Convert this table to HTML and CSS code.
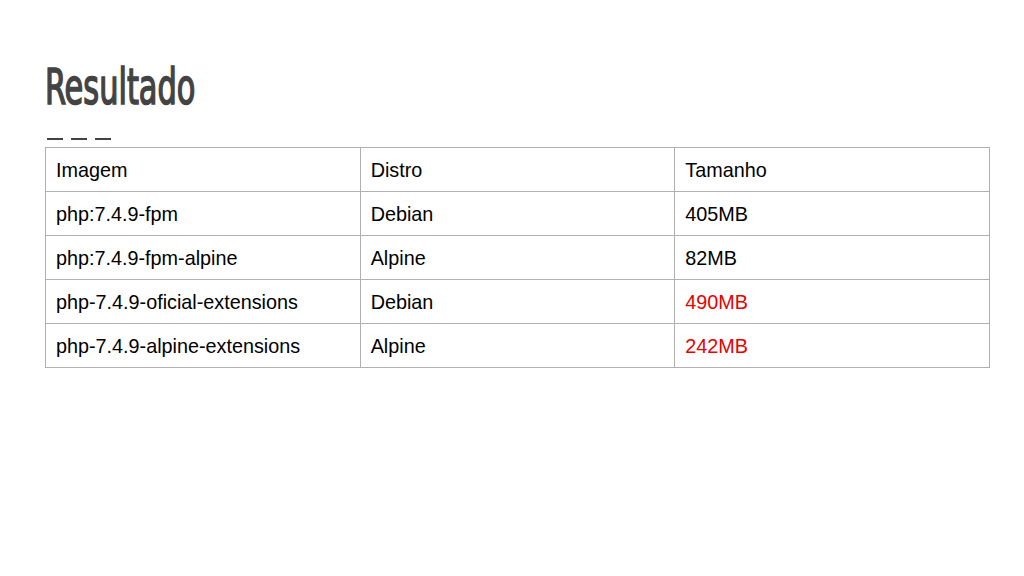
FILE: index.html
```html
<!DOCTYPE html>
<html lang="pt">
<head>
<meta charset="utf-8">
<title>Resultado</title>
<link rel="stylesheet" href="styles.css">
</head>
<body>
<main class="slide">
  <h1 class="title"><span class="title-text">Resultado</span></h1>
  <div class="dashes"><span></span><span></span><span></span></div>
  <table class="results">
    <tbody>
      <tr><td>Imagem</td><td>Distro</td><td>Tamanho</td></tr>
      <tr><td>php:7.4.9-fpm</td><td>Debian</td><td>405MB</td></tr>
      <tr><td>php:7.4.9-fpm-alpine</td><td>Alpine</td><td>82MB</td></tr>
      <tr><td>php-7.4.9-oficial-extensions</td><td>Debian</td><td class="warn">490MB</td></tr>
      <tr><td>php-7.4.9-alpine-extensions</td><td>Alpine</td><td class="warn">242MB</td></tr>
    </tbody>
  </table>
</main>
</body>
</html>
```

FILE: styles.css
```css
html, body {
  margin: 0;
  padding: 0;
  background: #ffffff;
}

.slide {
  width: 1024px;
  height: 576px;
  box-sizing: border-box;
  padding: 63px 34px 0 45px;
  overflow: hidden;
}

.title {
  margin: 0;
  font-family: "DejaVu Sans Condensed", "DejaVu Sans", sans-serif;
  font-stretch: condensed;
  font-weight: normal;
  font-size: 49px;
  line-height: 49px;
  color: #434343;
  -webkit-text-stroke: 1.6px #434343;
  white-space: nowrap;
}

.title-text {
  display: inline-block;
  transform: scaleX(0.69);
  transform-origin: left center;
}

.dashes {
  display: flex;
  gap: 8px;
  margin: 26px 0 7px 2px;
  height: 2px;
}

.dashes span {
  width: 16px;
  height: 2px;
  background: #434343;
}

.results {
  width: 945px;
  border-collapse: collapse;
  table-layout: fixed;
  font-family: "Liberation Sans", Arial, sans-serif;
  font-size: 19.8px;
  color: #000000;
}

.results td {
  height: 44px;
  box-sizing: border-box;
  padding: 2px 0 0 10px;
  border: 1px solid #b0b0b0;
  vertical-align: middle;
  white-space: nowrap;
}

.results td.warn {
  color: #e60000;
}
```
